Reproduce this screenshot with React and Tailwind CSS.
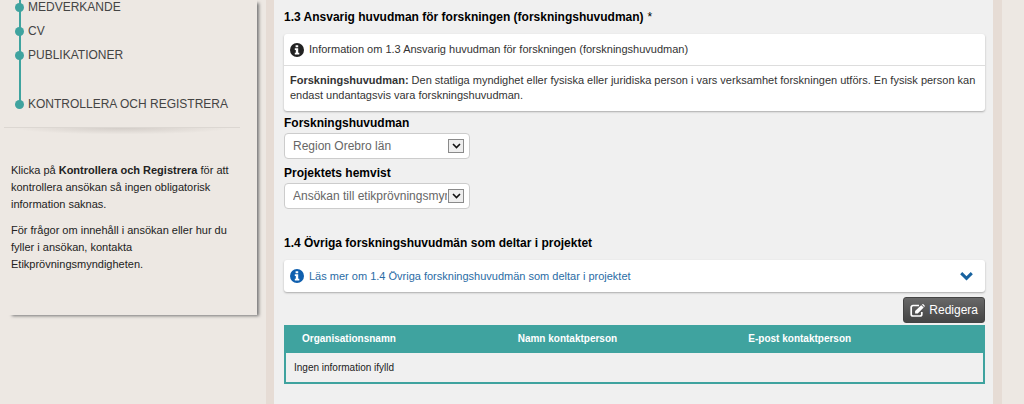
import { useState } from "react";

const steps = [
  { label: "MEDVERKANDE", href: "#medverkande" },
  { label: "CV", href: "#cv" },
  { label: "PUBLIKATIONER", href: "#publikationer" },
];

const InfoIcon = ({ className }) => (
  <svg viewBox="0 0 14 14" className={className} aria-hidden="true">
    <circle cx="7" cy="7" r="7" fill="currentColor" />
    <path
      d="M5.6 2.2h2.6v2H5.6z M4.8 5.3h3.4v4.4h1.1v1.7H4.8V9.7h1V7h-1z"
      fill="#ffffff"
    />
  </svg>
);

const EditIcon = () => (
  <svg viewBox="0 0 15 13" className="w-[15px] h-[13px]" fill="none" aria-hidden="true">
    <path
      d="M9 1.5H3A1.8 1.8 0 0 0 1.2 3.3v6.9A1.8 1.8 0 0 0 3 12h7a1.8 1.8 0 0 0 1.8-1.8V8"
      stroke="currentColor"
      strokeWidth="1.7"
    />
    <path d="M11.2 1.2l2.5 2.4-6 5.8H5.1V7z M11.9 0.6l0.6-0.4q0.5-0.3 0.9 0l1.2 1.2q0.4 0.5 0 1l-0.4 0.5z" fill="currentColor" />
  </svg>
);

const Step = ({ label, href }) => (
  <li className="flex items-center h-6 gap-1">
    <span className="w-[9px] h-[9px] rounded-full bg-[#3fa39f] shrink-0" />
    <a href={href} className="text-xs text-[#444444]">
      {label}
    </a>
  </li>
);

const SideMenu = () => (
  <aside className="ml-2 flow-root w-[249px] h-[315px] shadow-[3px_2px_3px_-1px_#777777]">
    <nav className="relative -mt-[5px] pl-[7px]">
      <span className="absolute left-[11px] top-0 h-[108px] w-[2px] bg-[#3fa39f]" />
      <ul className="relative">
        {steps.map((step) => (
          <Step key={step.label} label={step.label} href={step.href} />
        ))}
      </ul>
      <ul className="relative mt-[25px]">
        <Step label="KONTROLLERA OCH REGISTRERA" href="#registrera" />
      </ul>
    </nav>

    {/* Divider with a soft curved shadow */}
    <div className="-ml-1 mr-[17px] mt-[11px] h-2 border-t border-[#dcd7d2] bg-[radial-gradient(ellipse_at_top,#d3cdc8_0%,transparent_65%)]" />

    <div className="pl-[3px] pr-4 pt-[27px] text-[11px] leading-[17px] text-[#222222]">
      <p>
        Klicka på <b>Kontrollera och Registrera</b> för att kontrollera ansökan
        så ingen obligatorisk information saknas.
      </p>
      <p className="mt-[9px]">
        För frågor om innehåll i ansökan eller hur du fyller i ansökan, kontakta
        Etikprövningsmyndigheten.
      </p>
    </div>
  </aside>
);

const SelectField = ({ id, label, options }) => {
  const [value, setValue] = useState(options[0]);

  return (
    <div className="w-[186px]">
      <label htmlFor={id} className="block h-5 text-xs leading-5 font-bold text-black">
        {label}
      </label>
      <div className="relative">
        <select
          id={id}
          value={value}
          onChange={(e) => setValue(e.target.value)}
          className="block w-full h-[26px] appearance-none rounded border border-[#cccccc] bg-white pl-2 pr-[22px] text-xs text-[#666666]"
        >
          {options.map((option) => (
            <option key={option}>{option}</option>
          ))}
        </select>
        {/* Boxed arrow on top of the select */}
        <span className="absolute right-[6px] top-[6px] flex h-[14px] w-4 items-center justify-center border border-[#8a8a8a] bg-[#eeeeee] pointer-events-none">
          <svg viewBox="0 0 9 6" className="w-[9px] h-[6px]" fill="none" stroke="#111111" strokeWidth="1.6">
            <path d="M1 1 L4.5 4.5 L8 1" />
          </svg>
        </span>
      </div>
    </div>
  );
};

const App = () => {
  const [open, setOpen] = useState(false);

  return (
    <div className="flex min-h-screen overflow-hidden bg-[#ede8e3] font-['Liberation_Sans',Arial,sans-serif]">
      <div className="w-[266px] shrink-0">
        <SideMenu />
      </div>

      <main className="flex-1 mr-[22px] border-l-8 border-r-[9px] border-[#e6dcd5] bg-[#f0f0f0] pl-[10px] pr-2 pt-2">
        <h2 className="text-xs leading-[18px] font-bold text-black">
          1.3 Ansvarig huvudman för forskningen (forskningshuvudman)
          <span className="ml-1 font-normal">*</span>
        </h2>

        <section className="mt-2 rounded-[3px] bg-white text-[11px] text-[#333333] shadow-[0_1px_2px_#aaaaaa]">
          <div className="flex h-8 items-center gap-[5px] border-b border-[#dddddd] px-[6px]">
            <InfoIcon className="w-[14px] h-[14px] text-[#222222]" />
            <span>Information om 1.3 Ansvarig huvudman för forskningen (forskningshuvudman)</span>
          </div>
          <p className="px-[6px] pt-[7px] pb-2 leading-[15px]">
            <b>Forskningshuvudman:</b> Den statliga myndighet eller fysiska eller
            juridiska person i vars verksamhet forskningen utförs. En fysisk person
            kan endast undantagsvis vara forskningshuvudman.
          </p>
        </section>

        <div className="mt-[2px] flex flex-col gap-1">
          <SelectField id="huvudman" label="Forskningshuvudman" options={["Region Orebro län"]} />
          <SelectField
            id="hemvist"
            label="Projektets hemvist"
            options={["Ansökan till etikprövningsmyndigheten"]}
          />
        </div>

        <h2 className="mt-[25px] text-xs leading-[18px] font-bold text-black">
          1.4 Övriga forskningshuvudmän som deltar i projektet
        </h2>

        <button
          type="button"
          aria-expanded={open}
          onClick={() => setOpen(!open)}
          className="mt-2 flex w-full h-8 items-center gap-[5px] rounded-[3px] bg-white pl-[6px] pr-3 text-[11px] text-[#2a6ca5] shadow-[0_1px_2px_#aaaaaa]"
        >
          <InfoIcon className="w-[14px] h-[14px] text-[#0f5fae]" />
          <span className="flex-1 text-left">
            Läs mer om 1.4 Övriga forskningshuvudmän som deltar i projektet
          </span>
          <svg viewBox="0 0 13 9" className="w-[13px] h-[9px]" fill="none" stroke="#17629f" strokeWidth="3">
            <path d="M1.2 1.2 L6.5 6.3 L11.8 1.2" />
          </svg>
        </button>

        <div className="mt-[5px] flex justify-end">
          <button
            type="button"
            className="flex h-[26px] items-center gap-1 rounded-[3px] border border-[#444444] bg-linear-to-b from-[#686868] to-[#454545] px-[6px] text-xs text-white"
          >
            <EditIcon />
            Redigera
          </button>
        </div>

        <table className="mt-[2px] w-full table-fixed border-2 border-[#3fa39f] text-left text-[10px]">
          <thead className="bg-[#3fa39f] text-white">
            <tr className="h-[27px]">
              <th className="w-[31%] pl-4 pb-1">Organisationsnamn</th>
              <th className="w-[33%] pl-4 pb-1">Namn kontaktperson</th>
              <th className="pl-4 pb-1">E-post kontaktperson</th>
            </tr>
          </thead>
          <tbody>
            <tr className="h-[30px] text-[#222222]">
              <td colSpan={3} className="pl-2">
                Ingen information ifylld
              </td>
            </tr>
          </tbody>
        </table>
      </main>
    </div>
  );
};

export default App;
